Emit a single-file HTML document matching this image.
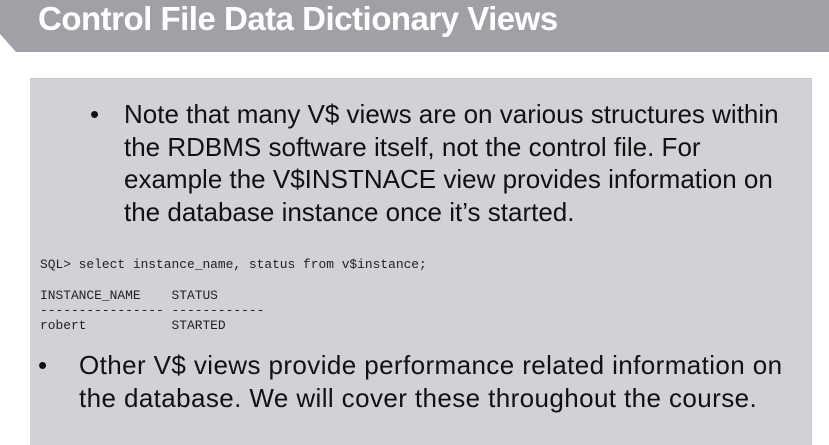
<!DOCTYPE html>
<html><head><style>
body{margin:0;width:829px;height:444px;background:#fff;position:relative;overflow:hidden;font-family:"Liberation Sans",Arial,sans-serif;}
.hdr{position:absolute;left:0;top:0;width:829px;height:52px;background:#a0a0a6;clip-path:polygon(0 0,829px 0,829px 52px,16px 52px,0 34px);}
.title{position:absolute;left:38px;top:0px;color:#fff;font-weight:bold;font-size:33px;letter-spacing:-0.5px;white-space:nowrap;}
.panel{position:absolute;left:30px;top:78px;width:782px;height:366px;background:#d2d1d6;border-top:1px solid #c4c3c8;}
.b{position:absolute;font-size:26px;line-height:32.5px;color:#111;white-space:nowrap;}
.code{position:absolute;left:40px;font-family:"Liberation Mono",monospace;font-size:12.9px;color:#222;white-space:pre;line-height:15px;}
</style></head><body>
<div class="hdr"></div>
<div class="title">Control File Data Dictionary Views</div>
<div class="panel"></div>
<div class="b" style="left:90px;top:98px;">•</div>
<div class="b" style="left:124px;top:98px;">Note that many V$ views are on various structures within<br>the RDBMS software itself, not the control file. For<br>example the V$INSTNACE view provides information on<br>the database instance once it’s started.</div>
<div class="code" style="top:257px;">SQL> select instance_name, status from v$instance;</div>
<div class="code" style="top:288px;">INSTANCE_NAME    STATUS
---------------- ------------
robert           STARTED</div>
<div class="b" style="left:38px;top:349px;">•</div>
<div class="b" style="left:79px;top:349px;letter-spacing:0.4px;">Other V$ views provide performance related information on<br>the database. We will cover these throughout the course.</div>
</body></html>
